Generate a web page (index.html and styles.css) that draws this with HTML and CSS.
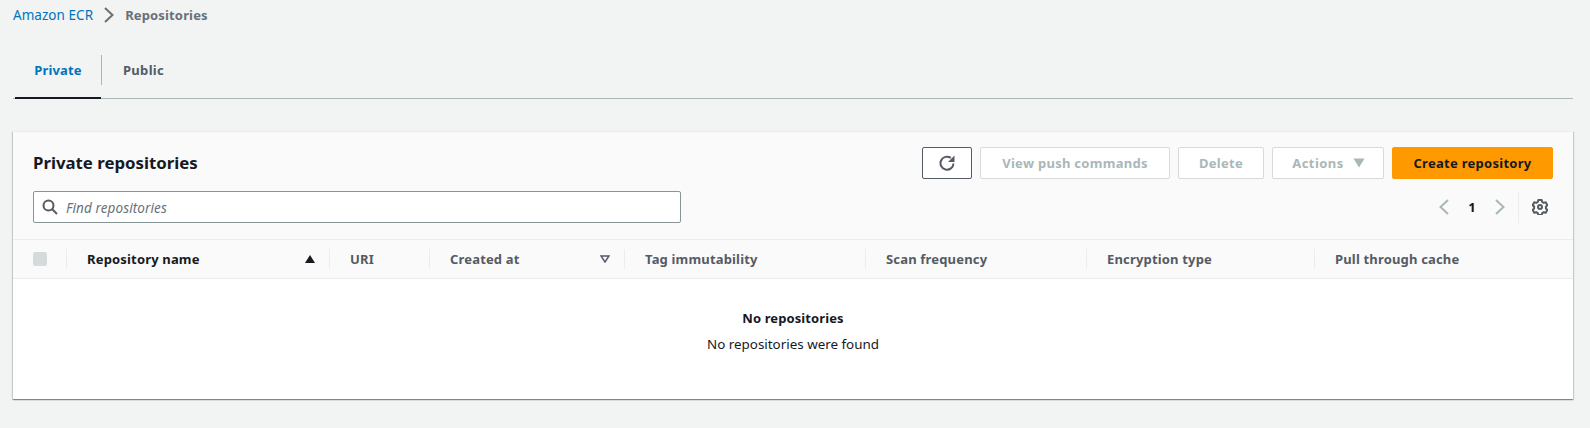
FILE: index.html
```html
<!DOCTYPE html>
<html lang="en">
<head>
<meta charset="utf-8">
<title>Repositories</title>
<link rel="stylesheet" href="styles.css">
</head>
<body>
<nav class="crumbs">
  <a class="crumb-link">Amazon ECR</a>
  <svg class="crumb-sep" viewBox="0 0 12 16" width="12" height="16"><path d="M2 1 9.500 8 2 15" fill="none" stroke="#687078" stroke-width="2"/></svg>
  <span class="crumb-current">Repositories</span>
</nav>
<div class="tabs">
  <div class="tab tab-active"><span class="tab-label">Private</span></div>
  <div class="tab tab-next"><span class="tab-label">Public</span></div>
</div>
<section class="card">
  <div class="card-head">
    <div class="title-row">
      <h2 class="title">Private repositories</h2>
      <div class="actions">
        <button class="btn btn-icon"><svg viewBox="0 0 16 16" width="16" height="16"><path d="M14.500 8.500A6.500 6.500 0 1 1 11.800 2.900" fill="none" stroke="#545b64" stroke-width="2"/><path d="M15.500 0.500V7H9z" fill="#545b64"/></svg></button>
        <button class="btn btn-off btn-push">View push commands</button>
        <button class="btn btn-off btn-delete">Delete</button>
        <button class="btn btn-off btn-actions">Actions<svg viewBox="0 0 12 10" width="12" height="10"><path d="M.5.500h11L6 9.500z" fill="#aab7b8"/></svg></button>
        <button class="btn btn-primary">Create repository</button>
      </div>
    </div>
    <div class="filter-row">
      <div class="search">
        <svg viewBox="0 0 16 16" width="16" height="16"><circle cx="6.500" cy="6.500" r="5" fill="none" stroke="#545b64" stroke-width="2"/><path d="m10 10 5 5" stroke="#545b64" stroke-width="2"/></svg>
        <span class="placeholder">Find repositories</span>
      </div>
      <div class="pager">
        <svg class="chev" viewBox="0 0 12 16" width="12" height="16"><path d="M10 1 2.500 8l7.500 7" fill="none" stroke="#aab7b8" stroke-width="2"/></svg>
        <span class="page-num">1</span>
        <svg class="chev" viewBox="0 0 12 16" width="12" height="16"><path d="M2 1l7.500 7L2 15" fill="none" stroke="#aab7b8" stroke-width="2"/></svg>
        <span class="pager-div"></span>
        <svg class="gear" viewBox="0 0 16 16" width="16" height="16"><path d="M6.300 1h3.400l.5 2 1.500.9 2-.6 1.700 3-1.500 1.400v1.800l1.500 1.400-1.700 2.900-2-.6-1.500.9-.5 2H6.300l-.5-2-1.500-.9-2 .6-1.700-2.900 1.500-1.400V7.300L.6 6.300l1.700-3 2 .6 1.500-.9z" fill="none" stroke="#545b64" stroke-width="2" stroke-linejoin="round"/><circle cx="8" cy="8" r="2" fill="none" stroke="#545b64" stroke-width="2"/></svg>
      </div>
    </div>
  </div>
  <div class="thead">
    <div class="th th-check"><span class="checkbox"></span></div>
    <div class="th th-sort"><span class="th-dark">Repository name</span><svg viewBox="0 0 10 8" width="10" height="8"><path d="M5 0l5 8H0z" fill="#16191f"/></svg></div>
    <div class="th">URI</div>
    <div class="th th-sort"><span>Created at</span><svg viewBox="0 0 10 8" width="10" height="8"><path d="M1 1h8L5 7z" fill="none" stroke="#545b64" stroke-width="1.500"/></svg></div>
    <div class="th">Tag immutability</div>
    <div class="th">Scan frequency</div>
    <div class="th">Encryption type</div>
    <div class="th th-last">Pull through cache</div>
  </div>
  <div class="empty">
    <strong class="empty-title">No repositories</strong>
    <p class="empty-text">No repositories were found</p>
  </div>
</section>
</body>
</html>
```
FILE: styles.css
```css
* { box-sizing: border-box; }
html, body { height: 100%; }
body {
  margin: 0;
  padding: 0 17px 0 13px;
  overflow: hidden;
  background: #f2f3f3;
  color: #16191f;
  font-family: "Noto Sans", "Liberation Sans", sans-serif;
  font-size: 14px;
  line-height: 20px;
}
.crumbs { display: flex; align-items: center; height: 30px; font-size: 13.500px; letter-spacing: .05px; }
.crumb-link { color: #0073bb; }
.crumb-sep { margin: 0 10px 0 10px; }
.crumb-current { color: #687078; font-weight: 700; font-size: 13px; letter-spacing: .15px; }
.tabs { display: flex; height: 69px; border-bottom: 1px solid #aab7b8; padding-left: 2px; }
.tab { display: flex; align-items: flex-start; height: 69px; padding-top: 25px; font-weight: 700; font-size: 13px; letter-spacing: .15px; color: #545b64; }
.tab-label { display: block; height: 30px; line-height: 30px; }
.tab-active { color: #0073bb; width: 86px; justify-content: center; border-bottom: 2px solid #16191f; }
.tab-next { width: 85px; letter-spacing: .3px; }
.tab-next .tab-label { padding: 0 20px 0 21px; border-left: 1px solid #aab7b8; }
.card {
  margin-top: 32px;
  background: #fff;
  border-top: 1px solid #eaeded;
  box-shadow: 0 1px 1px 0 rgba(0, 28, 36, .3), 1px 1px 1px 0 rgba(0, 28, 36, .15), -1px 1px 1px 0 rgba(0, 28, 36, .15);
  height: 268px;
}
.card-head { background: #fafafa; height: 108px; padding: 15px 20px 0; border-bottom: 1px solid #eaeded; }
.title-row { display: flex; justify-content: space-between; align-items: center; height: 32px; }
.title { margin: 0; font-size: 16.800px; line-height: 32px; font-weight: 700; color: #16191f; }
.actions { display: flex; gap: 8px; }
.btn {
  display: flex; align-items: center; justify-content: center;
  height: 32px; padding: 0; border-radius: 2px; border: 1px solid #d5dbdb;
  background: #fff; font: 700 13px/20px "Noto Sans", "Liberation Sans", sans-serif; letter-spacing: .28px;
}
.btn-icon { width: 50px; border-color: #545b64; }
.btn-off { color: #aab7b8; }
.btn-push { width: 190px; }
.btn-delete { width: 86px; }
.btn-actions { width: 112px; gap: 9px; padding-left: 1px; letter-spacing: .45px; }
.btn-primary { width: 161px; background: #ff9900; border-color: #ff9900; color: #16191f; }
.filter-row { display: flex; justify-content: space-between; align-items: center; margin-top: 12px; height: 32px; }
.search {
  display: flex; align-items: center; gap: 8px; width: 648px; height: 32px; padding: 0 8px;
  background: #fff; border: 1px solid #879596; border-radius: 2px;
}
.placeholder { font-style: italic; color: #687078; font-size: 13.500px; letter-spacing: .1px; padding-top: 2px; }
.pager { display: flex; align-items: center; height: 32px; padding-right: 5px; }
.chev { display: block; }
.page-num { width: 44px; text-align: center; font-weight: 700; font-size: 13px; }
.pager-div { width: 1px; height: 32px; background: #eaeded; margin: 0 13px 0 12px; }
.gear { display: block; }
.thead {
  display: grid;
  grid-template-columns: 54px 263px 100px 195px 241px 221px 228px 1fr;
  height: 39px; background: #fafafa; border-bottom: 1px solid #eaeded; align-items: center;
  color: #545b64; font-weight: 700; font-size: 13px; letter-spacing: .17px;
}
.th { display: flex; align-items: center; justify-content: space-between; height: 20px; padding: 0 20px; border-right: 1px solid #eaeded; }
.th-check { padding: 0 0 0 20px; }
.th-last { border-right: 0; }
.th-sort { padding-right: 14px; }
.th-dark { color: #16191f; }
.checkbox { display: block; width: 14px; height: 14px; background: #d5dbdb; border-radius: 2px; }
.empty { text-align: center; padding-top: 29px; }
.empty-title { display: block; font-weight: 700; font-size: 13px; letter-spacing: .1px; height: 24px; line-height: 20px; }
.empty-text { margin: 0; font-size: 13.400px; line-height: 24px; }
```
